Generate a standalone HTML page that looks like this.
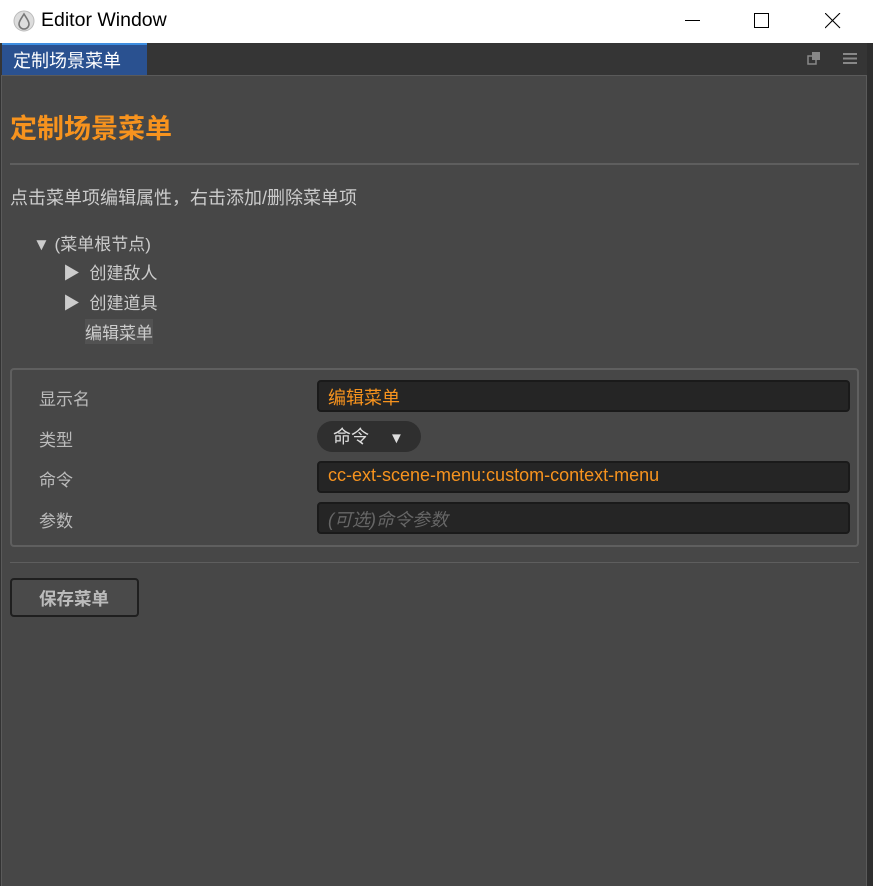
<!DOCTYPE html>
<html><head><meta charset="utf-8">
<style>
*{margin:0;padding:0;box-sizing:border-box}
body{width:873px;height:886px;background:#333;font-family:"Liberation Sans","Noto Sans CJK SC",sans-serif;overflow:hidden;position:relative}
.title{position:absolute;left:0;top:0;width:873px;height:43px;background:#fff}
.title .t{position:absolute;left:41px;top:9px;font-size:19.5px;color:#000}
.tabbar{position:absolute;left:0;top:43px;width:867px;height:32px;background:#353535}
.tab{position:absolute;left:2px;top:0;width:145px;height:32px;background:#2a5190;border-top:2px solid #3e8ee0;color:#fff;font-size:18px;padding:2px 0 0 11px}
.panel{position:absolute;left:1px;top:75px;width:866px;height:811px;background:#474747;border:1px solid #5a5a5a;border-bottom:none}
.right{position:absolute;left:867px;top:43px;width:6px;height:843px;background:#2e2e2e}
.h1{position:absolute;left:10px;top:107px;font-size:27px;font-weight:bold;color:#f7931e}
.hr{position:absolute;left:10px;width:849px;height:2px;background:#5e5e5e}
.txt{position:absolute;color:#ccc;font-size:17px}
.box{position:absolute;left:10px;top:368px;width:849px;height:179px;border:2px solid #5f5f5f;border-radius:4px}
.inp{position:absolute;left:317px;width:533px;height:32px;background:#252525;border:2px solid #1a1a1a;border-radius:4px;font-size:18px;color:#f7931e;padding:2px 0 0 9px}
.sel{position:absolute;left:317px;top:421px;width:104px;height:31px;background:#2f2f2f;border-radius:16px;color:#ddd;font-size:18px;padding:2px 0 0 16px}
.btn{position:absolute;left:10px;top:578px;width:129px;height:39px;background:#4a4a4a;border:2px solid #1f1f1f;border-radius:4px;color:#bbb;font-weight:bold;font-size:17.5px;padding:6px 0 0 27px}
</style></head><body>
<div class="title">
<svg style="position:absolute;left:13px;top:10px" width="22" height="22" viewBox="0 0 22 22"><circle cx="11" cy="11" r="10" fill="#ddd" stroke="#bbb"/><path d="M11 4 C8 9 6 11 6 14 A5 5 0 0 0 16 14 C16 11 14 9 11 4Z" fill="none" stroke="#777" stroke-width="1.6"/></svg>
<div class="t">Editor Window</div>
<div style="position:absolute;left:685px;top:20px;width:15px;height:1px;background:#000"></div>
<div style="position:absolute;left:754px;top:13px;width:15px;height:15px;border:1px solid #000"></div>
<svg style="position:absolute;left:825px;top:13px" width="16" height="16"><path d="M0 0L15 15M15 0L0 15" stroke="#000" stroke-width="1.1"/></svg>
</div>
<div class="tabbar">
<div class="tab">定制场景菜单</div>
<svg style="position:absolute;left:807px;top:8px" width="15" height="15"><rect x="1" y="5" width="8" height="8" fill="none" stroke="#888" stroke-width="1.5"/><rect x="5" y="1" width="8" height="8" fill="#888"/></svg>
<svg style="position:absolute;left:843px;top:9px" width="15" height="13"><path d="M0 2H14M0 6.5H14M0 11H14" stroke="#888" stroke-width="2"/></svg>
</div>
<div class="right"></div>
<div class="panel"></div>
<div class="h1">定制场景菜单</div>
<div class="hr" style="top:163px"></div>
<div class="txt" style="left:10px;top:184px;font-size:18px">点击菜单项编辑属性，右击添加/删除菜单项</div>
<div class="txt" style="left:33px;top:230px">▼ (菜单根节点)</div>
<div class="txt" style="left:63px;top:259px">▶&nbsp; 创建敌人</div>
<div class="txt" style="left:63px;top:289px">▶&nbsp; 创建道具</div>
<div class="txt" style="left:85px;top:319px;background:#525252">编辑菜单</div>
<div class="box"></div>
<div class="txt" style="left:39px;top:385px;color:#bbb">显示名</div>
<div class="txt" style="left:39px;top:426px;color:#bbb">类型</div>
<div class="txt" style="left:39px;top:466px;color:#bbb">命令</div>
<div class="txt" style="left:39px;top:507px;color:#bbb">参数</div>
<div class="inp" style="top:380px">编辑菜单</div>
<div class="sel">命令 &nbsp;&nbsp;&nbsp;<span style="font-size:15px">▼</span></div>
<div class="inp" style="top:461px">cc-ext-scene-menu:custom-context-menu</div>
<div class="inp" style="top:502px;color:#666;font-style:italic">(可选)命令参数</div>
<div class="hr" style="top:562px;height:1px"></div>
<div class="btn">保存菜单</div>
</body></html>
